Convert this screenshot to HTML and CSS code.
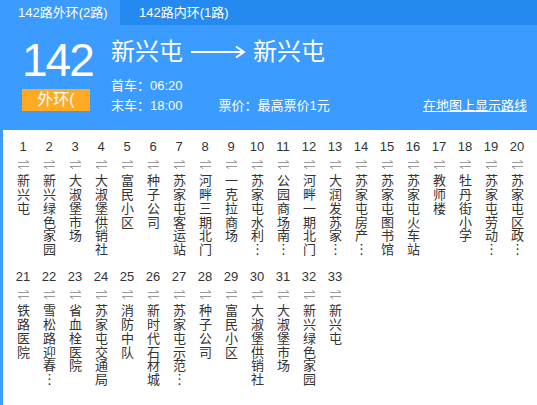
FILE: index.html
```html
<!DOCTYPE html>
<html lang="zh">
<head>
<meta charset="utf-8">
<link rel="stylesheet" href="styles.css">
</head>
<body>
<div class="tabs">
  <div class="tab active">142路外环(2路)</div>
  <div class="tab">142路内环(1路)</div>
</div>
<div class="header">
  <div class="left">
    <div class="num">142</div>
    <div class="badge">外环(</div>
  </div>
  <div class="right">
    <div class="title">新兴屯
      <svg class="bigarrow" width="56" height="14" viewBox="0 0 56 14"><line x1="1" y1="7" x2="54" y2="7" stroke="#fff" stroke-width="2"/><polyline points="46,1.5 54,7 46,12.5" fill="none" stroke="#fff" stroke-width="2"/></svg>
      新兴屯</div>
    <div class="info">首车：06:20</div>
    <div class="info row">
      <span>末车：18:00</span>
      <span class="price">票价：最高票价1元</span>
      <a class="maplink" href="#">在地图上显示路线</a>
    </div>
  </div>
</div>
<div class="stops" id="stops"></div>
<script>
var names = ["新兴屯","新兴绿色家园","大淑堡市场","大淑堡供销社","富民小区","种子公司","苏家屯客运站","河畔三期北门","一克拉商场","苏家屯水利…","公园商场南…","河畔一期北门","大润发苏家…","苏家屯房产…","苏家屯图书馆","苏家屯火车站","教师楼","牡丹街小学","苏家屯劳动…","苏家屯区政…","铁路医院","雪松路迎春…","省血栓医院","苏家屯交通局","消防中队","新时代石材城","苏家屯示范…","种子公司","富民小区","大淑堡供销社","大淑堡市场","新兴绿色家园","新兴屯"];
var box = document.getElementById('stops');
var html = '';
names.forEach(function(n, i){
  html += '<div class="stop"><div class="no">' + (i+1) + '</div>' +
    '<svg class="arr" width="11" height="9" viewBox="0 0 11 9"><path d="M0 2.5H11L7.5 0M11 6.5H0L3.5 9" fill="none" stroke="#9a9a9a" stroke-width="1"/></svg>' +
    '<div class="name">' + n + '</div></div>';
});
box.innerHTML = html;
</script>
</body>
</html>
```

FILE: styles.css
```css
html, body {
  margin: 0;
  padding: 0;
  background: #fff;
  font-family: "Liberation Sans", "Noto Sans CJK SC", sans-serif;
}
.tabs {
  display: flex;
  height: 25px;
  background: #258aef;
}
.tab {
  color: #fff;
  font-size: 13px;
  line-height: 25px;
  white-space: nowrap;
  padding: 0 18px 0 19px;
}
.tab.active {
  background: #3b9bff;
  width: 120px;
  box-sizing: border-box;
  padding-left: 18px;
  padding-right: 0;
}
.header {
  display: flex;
  height: 105px;
  box-sizing: border-box;
  background: #3b9bff;
  padding: 12px 10px 0 22px;
  color: #fff;
}
.left {
  width: 68px;
  display: flex;
  flex-direction: column;
}
.num {
  font-size: 46px;
  line-height: 46px;
  height: 46px;
  letter-spacing: -2px;
}
.badge {
  margin-top: 6px;
  height: 22px;
  line-height: 22px;
  background: #ffaa25;
  text-align: center;
  font-size: 16px;
  overflow: hidden;
}
.right {
  flex: 1;
  margin-left: 21px;
  display: flex;
  flex-direction: column;
}
.title {
  font-size: 24px;
  line-height: 30px;
  height: 30px;
  display: flex;
  align-items: center;
  white-space: nowrap;
}
.bigarrow {
  margin: 0 7px 0 7px;
}
.info {
  font-size: 13px;
  line-height: 20px;
  height: 20px;
  white-space: nowrap;
}
.title + .info {
  margin-top: 9px;
}
.row {
  display: flex;
}
.price {
  margin-left: 36px;
}
.maplink {
  margin-left: auto;
  color: #fff;
  text-decoration: underline;
}
.stops {
  border-left: 3px solid #3b9bff;
  padding-left: 7px;
  display: grid;
  grid-template-columns: repeat(20, 26px);
  grid-auto-rows: 130px;
  height: 275px;
  box-sizing: border-box;
}
.stop {
  display: flex;
  flex-direction: column;
  align-items: center;
  padding-top: 9px;
  color: #333;
}
.no {
  font-size: 13px;
  line-height: 16px;
  height: 16px;
}
.arr {
  margin-top: 5px;
  display: block;
}
.name {
  margin-top: 5px;
  writing-mode: vertical-rl;
  text-orientation: upright;
  font-family: "Noto Sans CJK SC", sans-serif;
  font-size: 13px;
  line-height: 14px;
  letter-spacing: 0.7px;
}
```
